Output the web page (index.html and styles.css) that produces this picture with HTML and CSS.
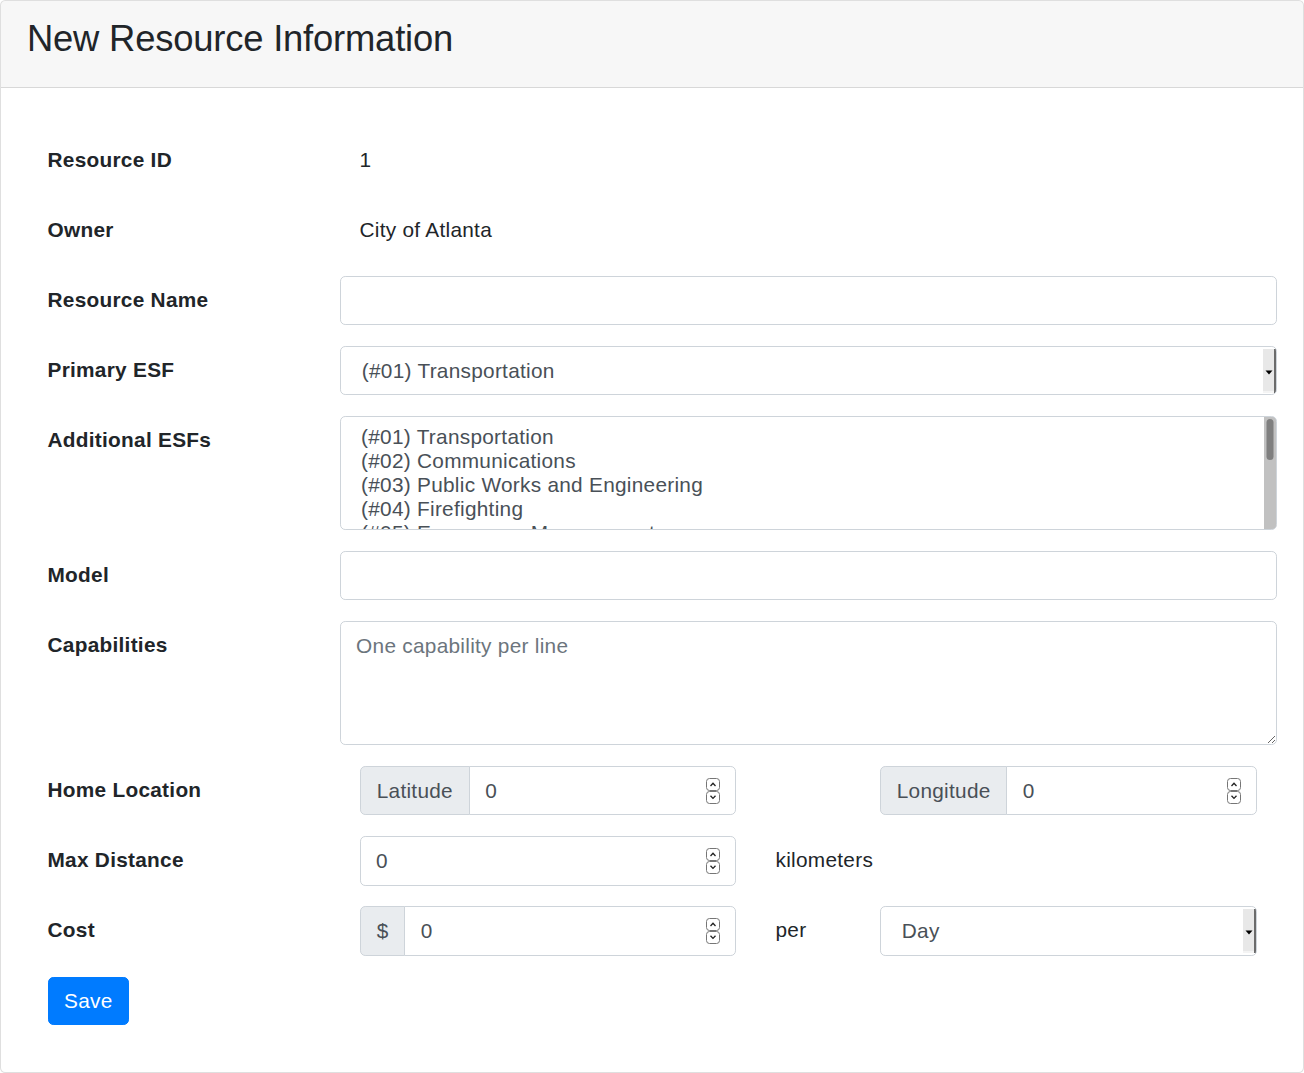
FILE: index.html
```html
<!DOCTYPE html>
<html lang="en">
<head>
<meta charset="utf-8">
<title>New Resource Information</title>
<link rel="stylesheet" href="styles.css">
</head>
<body>
<div class="card">
  <div class="card-header">
    <h3 class="card-title">New Resource Information</h3>
  </div>
  <div class="card-body">
    <form class="form">
      <div class="field-row">
        <label class="field-label">Resource ID</label>
        <div class="field-value">1</div>
      </div>
      <div class="field-row">
        <label class="field-label">Owner</label>
        <div class="field-value">City of Atlanta</div>
      </div>
      <div class="field-row">
        <label class="field-label" for="name">Resource Name</label>
        <input class="form-control" id="name" type="text">
      </div>
      <div class="field-row">
        <label class="field-label" for="esf">Primary ESF</label>
        <select class="form-control select" id="esf">
          <option>(#01) Transportation</option>
          <option>(#02) Communications</option>
          <option>(#03) Public Works and Engineering</option>
        </select>
      </div>
      <div class="field-row">
        <label class="field-label" for="addesf">Additional ESFs</label>
        <select class="form-control listbox" id="addesf" multiple>
          <option>(#01) Transportation</option>
          <option>(#02) Communications</option>
          <option>(#03) Public Works and Engineering</option>
          <option>(#04) Firefighting</option>
          <option>(#05) Emergency Management</option>
          <option>(#06) Mass Care, Emergency Assistance, Housing, and Human Services</option>
          <option>(#07) Logistics Management and Resource Support</option>
          <option>(#08) Public Health and Medical Services</option>
          <option>(#09) Search and Rescue</option>
          <option>(#10) Oil and Hazardous Materials Response</option>
          <option>(#11) Agriculture and Natural Resources</option>
          <option>(#12) Energy</option>
          <option>(#13) Public Safety and Security</option>
          <option>(#14) Long-Term Community Recovery</option>
          <option>(#15) External Affairs</option>
        </select>
      </div>
      <div class="field-row">
        <label class="field-label" for="model">Model</label>
        <input class="form-control" id="model" type="text">
      </div>
      <div class="field-row">
        <label class="field-label" for="caps">Capabilities</label>
        <textarea class="form-control textarea" id="caps" placeholder="One capability per line"></textarea>
      </div>
      <div class="field-row">
        <label class="field-label">Home Location</label>
        <div class="sub-grid">
          <div class="input-group">
            <span class="input-group-text">Latitude</span>
            <input class="form-control group-input number" type="number" value="0">
          </div>
          <div class="sub-text"></div>
          <div class="input-group">
            <span class="input-group-text">Longitude</span>
            <input class="form-control group-input number" type="number" value="0">
          </div>
        </div>
      </div>
      <div class="field-row">
        <label class="field-label">Max Distance</label>
        <div class="sub-grid">
          <input class="form-control num number" type="number" value="0">
          <div class="sub-text">kilometers</div>
          <div></div>
        </div>
      </div>
      <div class="field-row">
        <label class="field-label">Cost</label>
        <div class="sub-grid">
          <div class="input-group">
            <span class="input-group-text">$</span>
            <input class="form-control group-input number" type="number" value="0">
          </div>
          <div class="sub-text">per</div>
          <select class="form-control select">
            <option>Day</option>
            <option>Week</option>
            <option>Month</option>
          </select>
        </div>
      </div>
      <div class="actions">
        <button class="btn-primary" type="button">Save</button>
      </div>
    </form>
  </div>
</div>
</body>
</html>
```
FILE: styles.css
```css
html, body {
  margin: 0;
  padding: 0;
}
body {
  font-family: "Liberation Sans", Arial, sans-serif;
  font-size: 20.8px;
  line-height: 1.5;
  letter-spacing: 0.28px;
  color: #212529;
  background: #fff;
}
.card {
  border: 1px solid rgba(0, 0, 0, 0.125);
  border-radius: 5.2px;
  background: #fff;
  overflow: hidden;
}
.card-header {
  background: rgba(0, 0, 0, 0.03);
  border-bottom: 1px solid rgba(0, 0, 0, 0.125);
  padding: 15.6px 26px 16.2px;
}
.card-title {
  margin: 0 0 10.4px;
  font-size: 36.4px;
  font-weight: 400;
  line-height: 1.2;
  letter-spacing: -0.2px;
}
.card-body {
  padding: 47.6px 26px 26px;
}
.form {
  margin: 0;
}
.field-row {
  display: grid;
  grid-template-columns: 312.5px 1fr;
  margin-bottom: 20.8px;
}
.field-label {
  padding: 8.1px 19.5px 10.1px 20.5px;
  font-weight: 700;
  line-height: 1.5;
}
.field-value {
  padding: 8.1px 20px 10.1px;
  line-height: 1.5;
}
.form-control {
  display: block;
  width: 100%;
  box-sizing: border-box;
  height: 49.4px;
  padding: 7.8px 19.5px;
  font-family: inherit;
  font-size: 20.8px;
  line-height: 1.5;
  letter-spacing: 0.28px;
  color: #495057;
  background-color: #fff;
  border: 1px solid #ced4da;
  border-radius: 5.2px;
  margin: 0;
}
.form-control::placeholder {
  color: #6c757d;
  opacity: 1;
}
.select {
  appearance: none;
  -webkit-appearance: none;
  padding: 7.8px 20px 7.8px 21.3px;
  background-image: url("data:image/svg+xml,%3Csvg xmlns='http://www.w3.org/2000/svg' width='13' height='44'%3E%3Crect x='0' y='0' width='11' height='44' fill='%23e8e8e8'/%3E%3Crect x='0' y='42' width='11' height='2' fill='%23f4f4f4'/%3E%3Crect x='11' y='0' width='2' height='44' fill='%236b6b6b'/%3E%3Cpath d='M2.5 21.5h7l-3.5 4z' fill='%23000'/%3E%3C/svg%3E");
  background-repeat: no-repeat;
  background-position: right 0 center;
}
.listbox {
  height: 113.6px;
  padding: 7.8px 18.5px 7.8px 20.5px;
  overflow-y: hidden;
  background-image: url("data:image/svg+xml,%3Csvg xmlns='http://www.w3.org/2000/svg' width='12' height='112'%3E%3Crect x='0' y='0' width='12' height='112' fill='%23c1c1c1'/%3E%3Crect x='2.5' y='2' width='7' height='41' rx='3.5' fill='%237f7f7f'/%3E%3C/svg%3E");
  background-repeat: no-repeat;
  background-position: right 0 top 0;
  background-size: 12px 100%;
}
.listbox option {
  padding: 0;
  line-height: 24px;
  min-height: 0;
}
.textarea {
  height: 124.4px;
  padding: 7.8px 15.6px;
  resize: vertical;
}
.sub-grid {
  display: grid;
  grid-template-columns: 376px 64px 1fr;
  column-gap: 40px;
  padding: 0 20px;
}
.sub-text {
  padding: 8.1px 0 10.1px;
  line-height: 1.5;
  white-space: nowrap;
}
.num {
  padding: 7.8px 15.6px;
}
.number {
  appearance: textfield;
  -moz-appearance: textfield;
  background-image: url("data:image/svg+xml,%3Csvg xmlns='http://www.w3.org/2000/svg' width='14' height='26'%3E%3Crect x='0.5' y='0.5' width='13' height='12' rx='3' fill='%23fff' stroke='%23767676'/%3E%3Crect x='0.5' y='13.5' width='13' height='12' rx='3' fill='%23fff' stroke='%23767676'/%3E%3Cpath d='M4.5 8l2.5-2.7 2.5 2.7' fill='none' stroke='%23222' stroke-width='1.3'/%3E%3Cpath d='M4.5 17.7l2.5 2.7 2.5-2.7' fill='none' stroke='%23222' stroke-width='1.3'/%3E%3C/svg%3E");
  background-repeat: no-repeat;
  background-position: right 15px center;
}
.number::-webkit-inner-spin-button,
.number::-webkit-outer-spin-button {
  -webkit-appearance: none;
  margin: 0;
}
.input-group {
  display: flex;
  align-items: stretch;
  width: 100%;
}
.input-group-text {
  display: flex;
  align-items: center;
  padding: 7.8px 15.6px 7.8px 16.2px;
  font-size: 20.8px;
  line-height: 1.5;
  color: #495057;
  background: #e9ecef;
  border: 1px solid #ced4da;
  border-radius: 5.2px 0 0 5.2px;
  white-space: nowrap;
}
.group-input {
  flex: 1 1 auto;
  width: 1%;
  min-width: 0;
  padding: 7.8px 15.6px;
  margin-left: -1px;
  border-radius: 0 5.2px 5.2px 0;
}
.actions {
  margin-bottom: 20.8px;
  padding-left: 20.5px;
}
.btn-primary {
  display: inline-block;
  font-family: inherit;
  font-size: 20.8px;
  line-height: 1.5;
  letter-spacing: 0.28px;
  padding: 7.8px 15.6px;
  color: #fff;
  background: #007bff;
  border: 1px solid #007bff;
  border-radius: 5.2px;
  cursor: pointer;
}
```
